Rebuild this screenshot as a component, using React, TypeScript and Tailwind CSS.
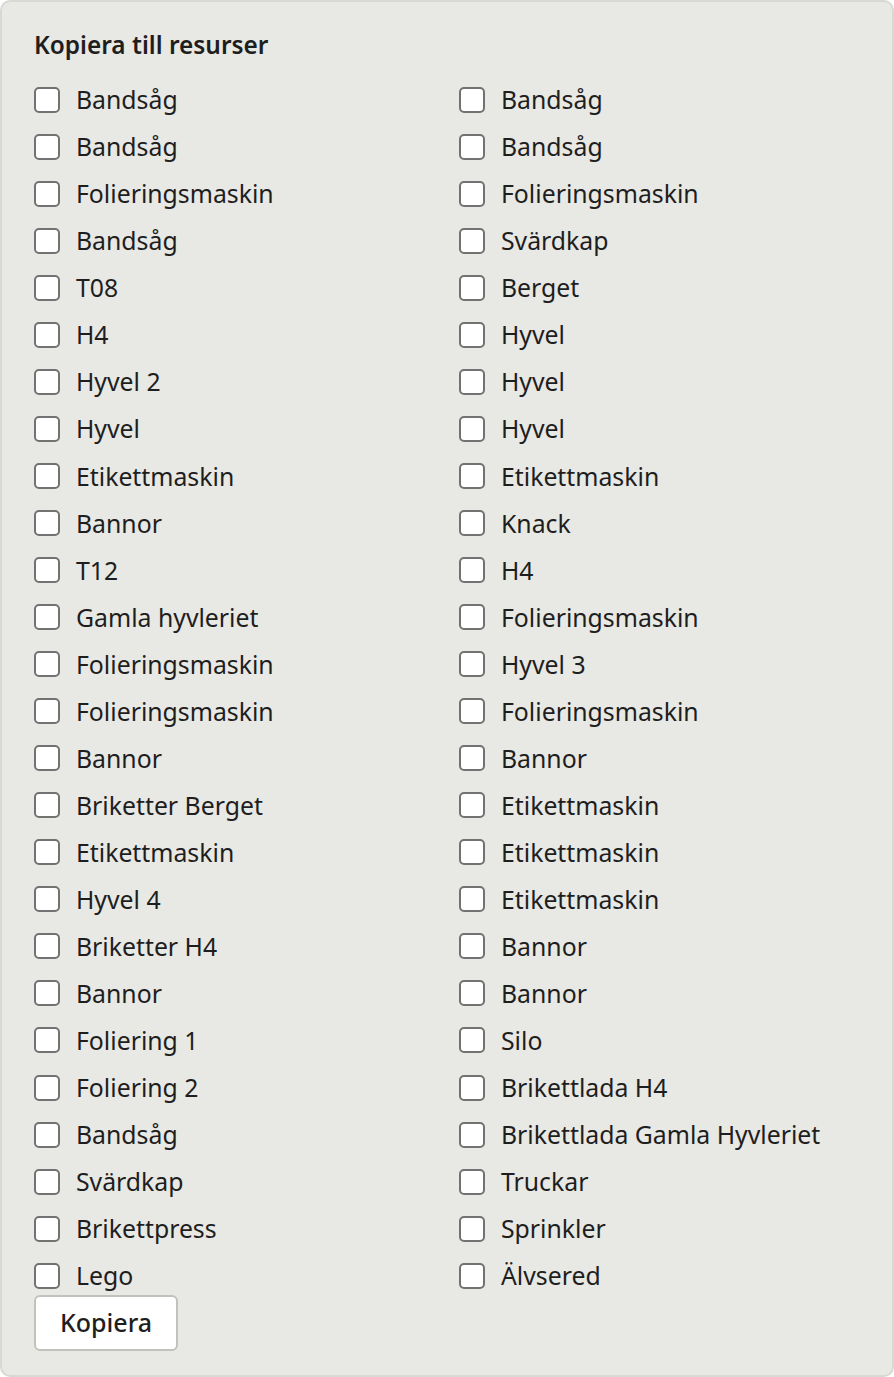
const left = [
  "Bandsåg",
  "Bandsåg",
  "Folieringsmaskin",
  "Bandsåg",
  "T08",
  "H4",
  "Hyvel 2",
  "Hyvel",
  "Etikettmaskin",
  "Bannor",
  "T12",
  "Gamla hyvleriet",
  "Folieringsmaskin",
  "Folieringsmaskin",
  "Bannor",
  "Briketter Berget",
  "Etikettmaskin",
  "Hyvel 4",
  "Briketter H4",
  "Bannor",
  "Foliering 1",
  "Foliering 2",
  "Bandsåg",
  "Svärdkap",
  "Brikettpress",
  "Lego",
];

const right = [
  "Bandsåg",
  "Bandsåg",
  "Folieringsmaskin",
  "Svärdkap",
  "Berget",
  "Hyvel",
  "Hyvel",
  "Hyvel",
  "Etikettmaskin",
  "Knack",
  "H4",
  "Folieringsmaskin",
  "Hyvel 3",
  "Folieringsmaskin",
  "Bannor",
  "Etikettmaskin",
  "Etikettmaskin",
  "Etikettmaskin",
  "Bannor",
  "Bannor",
  "Silo",
  "Brikettlada H4",
  "Brikettlada Gamla Hyvleriet",
  "Truckar",
  "Sprinkler",
  "Älvsered",
];

function Item({ label }: { label: string }) {
  return (
    <label className="flex h-[47.05px] items-center gap-4">
      <input
        type="checkbox"
        className="h-[26px] w-[26px] shrink-0 appearance-none rounded-[5px] border-2 border-[#727272] bg-white"
      />
      <span className="text-[24.8px] leading-none text-[#1e1e1e]">{label}</span>
    </label>
  );
}

export default function App() {
  const rows = left.map((l, i) => [l, right[i]]);
  return (
    <div
      className="h-[1377px] w-[894px] rounded-[10px] border-2 border-[#d8d8d4] bg-[#e8e8e4] px-[32px] pt-[27px]"
      style={{ fontFamily: '"Noto Sans", "Open Sans", sans-serif' }}
    >
      <h2 className="h-[47px] text-[24.4px] font-semibold leading-[32px] text-[#1e1e1e]">
        Kopiera till resurser
      </h2>
      <div className="grid grid-cols-[425px_1fr]">
        {rows.map(([l, r], i) => (
          <div key={i} className="contents">
            <Item label={l} />
            <Item label={r} />
          </div>
        ))}
      </div>
      <button className="mt-[-4px] h-[56px] rounded-[6px] border-2 border-[#c2c2bd] bg-white px-[24px] text-[25px] font-medium text-[#1e1e1e]">
        Kopiera
      </button>
    </div>
  );
}
